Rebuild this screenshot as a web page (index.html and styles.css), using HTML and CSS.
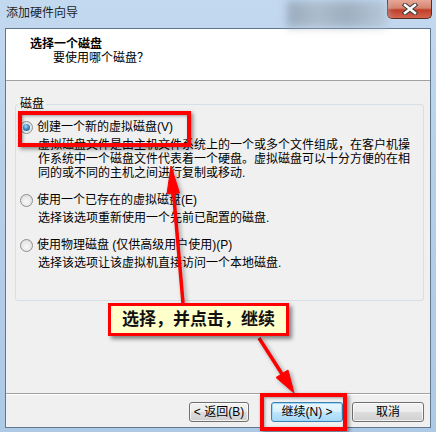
FILE: index.html
```html
<!DOCTYPE html>
<html lang="zh-CN">
<head>
    <meta charset="UTF-8">
    <title>添加硬件向导</title>
    <link rel="stylesheet" href="styles.css">
</head>
<body>
    <div class="window">
        <div class="titlebar">
            <span class="title">添加硬件向导</span>
            <span class="glass-blur"></span>
            <span class="close-btn">
                <svg width="16" height="12" viewBox="0 0 16 12">
                    <path d="M3 2 L13 10 M13 2 L3 10" stroke="#3b3b3b" stroke-width="4.5" stroke-linecap="square"/>
                    <path d="M3 2 L13 10 M13 2 L3 10" stroke="#ffffff" stroke-width="2.5" stroke-linecap="square"/>
                </svg>
            </span>
        </div>

        <div class="client">
            <div class="header">
                <div class="header-title">选择一个磁盘</div>
                <div class="header-sub">要使用哪个磁盘？</div>
            </div>

            <div class="main">
                <fieldset class="group">
                    <legend>磁盘</legend>

                    <div class="option first">
                        <div class="option-row">
                            <span class="radio checked"></span>
                            <span>创建一个新的虚拟磁盘(V)</span>
                        </div>
                        <div class="option-desc">虚拟磁盘文件是由主机文件系统上的一个或多个文件组成，在客户机操<br>作系统中一个磁盘文件代表着一个硬盘。虚拟磁盘可以十分方便的在相<br>同的或不同的主机之间进行复制或移动.</div>
                    </div>

                    <div class="option">
                        <div class="option-row">
                            <span class="radio"></span>
                            <span>使用一个已存在的虚拟磁盘(E)</span>
                        </div>
                        <div class="option-desc">选择该选项重新使用一个先前已配置的磁盘.</div>
                    </div>

                    <div class="option">
                        <div class="option-row">
                            <span class="radio"></span>
                            <span>使用物理磁盘 (仅供高级用户使用)(P)</span>
                        </div>
                        <div class="option-desc">选择该选项让该虚拟机直接访问一个本地磁盘.</div>
                    </div>
                </fieldset>
            </div>

            <div class="footer">
                <button class="btn btn-back">&lt; 返回(B)</button>
                <button class="btn btn-next default">继续(N) &gt;</button>
                <button class="btn">取消</button>
            </div>
        </div>
    </div>

    <!-- annotations drawn over the dialog -->
    <div class="mark mark-option"></div>
    <div class="mark mark-next"></div>
    <svg class="arrows" width="436" height="432" viewBox="0 0 436 432">
        <g fill="#ff0000" stroke="#ff0000">
            <line x1="183" y1="303" x2="173.3" y2="190" stroke-width="3.5"/>
            <polygon points="171,166 179.5,193 167,194" stroke-width="1"/>
            <line x1="259" y1="338" x2="282" y2="374" stroke-width="3.5"/>
            <polygon points="294,393 276,377.5 288,370" stroke-width="1"/>
        </g>
    </svg>
    <div class="callout">选择，并点击，继续</div>
</body>
</html>
```

FILE: styles.css
```css
body {
    margin: 0;
    width: 436px;
    height: 432px;
    overflow: hidden;
    position: relative;
    font-family: "Liberation Sans", "Noto Sans CJK SC", sans-serif;
    font-size: 12px;
    color: #000;
    background: linear-gradient(180deg, #c3d9f0 0%, #b6cfe9 40%, #aec9e6 100%);
}

.window {
    display: flex;
    flex-direction: column;
    height: 432px;
}

.titlebar {
    height: 28px;
    display: flex;
    align-items: flex-start;
    flex-shrink: 0;
}

.title {
    margin: 6px 0 0 6px;
    line-height: 14px;
    color: #1e1e1e;
}

.glass-blur {
    margin: 1px 0 0 auto;
    width: 100px;
    height: 26px;
    background: linear-gradient(90deg, #8e9fb0 0%, #a8b6c4 30%, #95a5b5 60%, #b3c3d3 100%);
    filter: blur(4px);
    opacity: 0.8;
}

.close-btn {
    width: 45px;
    height: 19px;
    margin-right: 4px;
    box-sizing: border-box;
    border: 1px solid #5d2a22;
    border-top: none;
    border-radius: 0 0 5px 5px;
    background: linear-gradient(180deg, #e9a797 0%, #d5836f 45%, #c13d27 55%, #d2664f 100%);
    display: flex;
    align-items: center;
    justify-content: center;
}

.client {
    flex: 1;
    margin: 0 5px 4px 5px;
    border: 1px solid #62768c;
    background: #f0f0f0;
    display: flex;
    flex-direction: column;
}

.header {
    height: 52px;
    box-sizing: border-box;
    padding: 8px 0 0 24px;
    background: #ffffff;
    border-bottom: 1px solid #a0a0a0;
    line-height: 14px;
}

.header-title {
    font-weight: 700;
}

.header-sub {
    padding-left: 23px;
}

.main {
    flex: 1;
}

.group {
    margin: 15px 6px 0 9px;
    padding: 0 0 30px 0;
    border: 1px solid #d5dfe5;
    border-radius: 3px;
}

.group legend {
    margin-left: 2px;
    padding: 0 2px;
    line-height: 16px;
}

.option {
    margin: 12px 0 0 4px;
}

.option.first {
    margin-top: 7px;
}

.option-row {
    display: flex;
    align-items: center;
    gap: 4px;
    line-height: 16px;
}

.option-desc {
    margin-top: 3px;
    padding-left: 18px;
    line-height: 14px;
}

.radio {
    position: relative;
    width: 13px;
    height: 13px;
    box-sizing: border-box;
    border-radius: 50%;
    border: 1px solid #8f8f8f;
    background: radial-gradient(circle at 50% 60%, #f9f9f9 0%, #e6e6e6 60%, #cfcfcf 100%);
}

.radio.checked::after {
    content: "";
    position: absolute;
    left: 2px;
    top: 2px;
    width: 7px;
    height: 7px;
    border-radius: 50%;
    background: radial-gradient(circle at 40% 35%, #a8dcfa 0%, #3d8cc9 45%, #1d4f80 100%);
}

.footer {
    height: 34px;
    box-sizing: border-box;
    border-top: 1px solid #a0a0a0;
    box-shadow: inset 0 1px 0 #ffffff;
    display: flex;
    justify-content: flex-end;
    align-items: flex-start;
    padding: 8px 6px 0 0;
}

.btn {
    width: 72px;
    height: 20px;
    padding: 0;
    margin-left: 9px;
    font-family: inherit;
    font-size: 12px;
    line-height: 16px;
    color: #000;
    border: 1px solid #707070;
    border-radius: 3px;
    background: linear-gradient(180deg, #f2f2f2 0%, #ebebeb 50%, #dddddd 51%, #cfcfcf 100%);
    box-shadow: inset 0 0 0 1px rgba(255, 255, 255, 0.7);
}

.btn-back {
    width: 60px;
}

.btn-next {
    margin-left: 22px;
}

.btn.default {
    border-color: #3c7fb1;
    background: linear-gradient(180deg, #eaf6fd 0%, #d9f0fc 50%, #bee6fd 51%, #a7d9f5 100%);
    box-shadow: inset 0 0 0 1px #9fd8f7;
}

/* annotation overlays */
.mark {
    position: absolute;
    box-sizing: border-box;
    border: 4px solid #ff0000;
    box-shadow: 2px 2px 4px rgba(0, 0, 0, 0.45), inset 1px 1px 3px rgba(0, 0, 0, 0.35);
}

.mark-option {
    left: 18px;
    top: 111px;
    width: 173px;
    height: 36px;
}

.mark-next {
    left: 260px;
    top: 393px;
    width: 87px;
    height: 38px;
}

.arrows {
    position: absolute;
    left: 0;
    top: 0;
    filter: drop-shadow(2px 2px 2px rgba(0, 0, 0, 0.35));
}

.callout {
    position: absolute;
    left: 108px;
    top: 303px;
    width: 181px;
    height: 33px;
    box-sizing: border-box;
    padding-left: 11px;
    border: 3px solid #ff0000;
    background: #ffffcc;
    box-shadow: 3px 3px 4px rgba(0, 0, 0, 0.45);
    font-size: 17px;
    font-weight: 700;
    line-height: 27px;
    color: #111;
}
```
